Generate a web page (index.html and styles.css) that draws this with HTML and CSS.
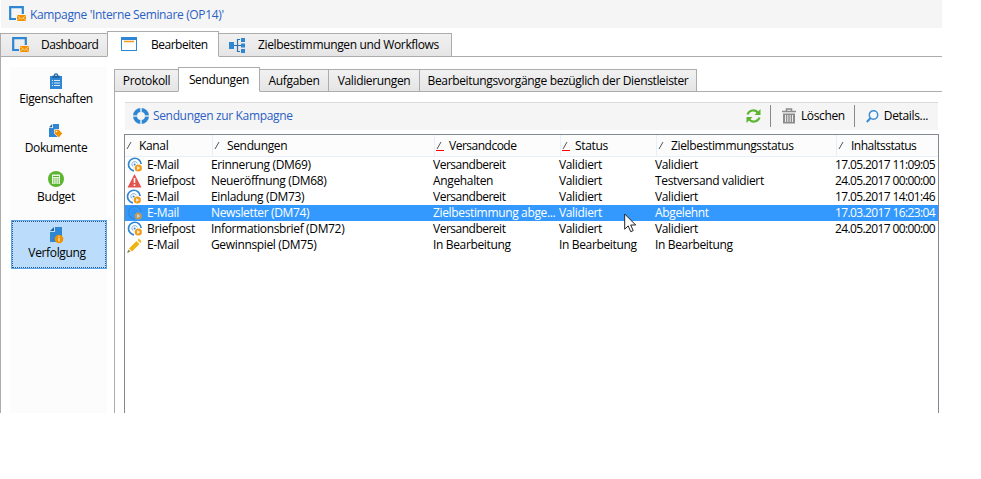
FILE: index.html
```html
<!DOCTYPE html>
<html lang="de">
<head>
<meta charset="utf-8">
<title>Kampagne</title>
<link rel="stylesheet" href="styles.css">
</head>
<body>
<svg class="defs" width="0" height="0">
  <symbol id="campaign" viewBox="0 0 17 16">
    <path d="M7 13H1.200V1.200h12.600V8" fill="none" stroke="#2f86d2" stroke-width="2.200"/>
    <rect x="8" y="9" width="9" height="6" fill="#f29100"/>
    <path d="M8 9.500l4.500 3.500 4.500-3.500M8 14.500l3-2.500M17 14.500l-3-2.500" fill="none" stroke="#fbd9a0" stroke-width=".8"/>
  </symbol>
  <symbol id="target" viewBox="0 0 16 16">
    <path d="M14.100 7A6.300 6.300 0 1 0 7 13.800" fill="none" stroke="#2f86d2" stroke-width="1.700"/>
    <path d="M10.300 6.300A2.800 2.800 0 1 0 6.500 9.900" fill="none" stroke="#2f86d2" stroke-width="1" opacity=".6"/>
    <circle cx="7.600" cy="7.400" r="1" fill="#2f86d2"/>
    <circle cx="11.300" cy="11" r="3.600" fill="#f29a1c"/>
    <path d="M10.200 9l3 2-3 2z" fill="#fff3dc"/>
  </symbol>
  <symbol id="slash" viewBox="0 0 8 10">
    <path d="M1 8l4-7" stroke="#555" stroke-width="1" fill="none"/>
  </symbol>
</svg>
<div class="window">
  <header class="titlebar">
    <svg class="icon17"><use href="#campaign"/></svg>
    <span class="title">Kampagne 'Interne Seminare (OP14)'</span>
  </header>
  <nav class="tabs main-tabs">
    <div class="tab t-dash"><svg class="icon17"><use href="#campaign"/></svg><span class="tight">Dashboard</span></div>
    <div class="tab t-edit active"><svg width="16" height="14" viewBox="0 0 16 14"><rect x=".5" y=".5" width="15" height="13" fill="#fff" stroke="#2f86d2"/><path d="M0 0h16v3H0z" fill="#2f86d2"/><path d="M3 4.500h10" stroke="#f29a1c" stroke-width="1.500"/></svg><span class="tight">Bearbeiten</span></div>
    <div class="tab t-flow"><svg width="17" height="15" viewBox="0 0 17 15"><path d="M0 4h5v7H0zM12 0h4v4h-4zM12 5.500h4v4h-4zM12 11h4v4h-4z" fill="#2f86d2"/><path d="M5 7.500h7M11 1.500H8.500v12H11" fill="none" stroke="#2b6fae" stroke-width="1.200"/></svg><span>Zielbestimmungen und Workflows</span></div>
  </nav>
  <div class="body">
    <aside class="sidebar">
      <div class="side-item">
        <svg width="12" height="16" viewBox="0 0 12 16"><path d="M0 3h12v13H0z" fill="#2f86d2"/><path d="M2.500 5V2.500h1.300a2.200 2.200 0 0 1 4.400 0h1.300V5z" fill="#23639f"/><circle cx="6" cy="2.300" r=".8" fill="#fff"/><path d="M2 7.500h1M4 7.500h6M2 10h1M4 10h6M2 12.500h1M4 12.500h6" stroke="#d7e9f8" stroke-width="1"/></svg>
        <span>Eigenschaften</span>
      </div>
      <div class="side-item">
        <svg width="14" height="14" viewBox="0 0 14 14"><path d="M4 0h6v13H0V4h4z" fill="#2f86d2"/><path d="M0 3.200L3.200 0v3.200z" fill="#23639f"/><path d="M5.500 5.500h4.500l3.500 4-3.500 4.200-4.500-4z" fill="#f29100" stroke="#fff" stroke-width=".7"/><circle cx="7.500" cy="7.500" r=".8" fill="#fff"/></svg>
        <span>Dokumente</span>
      </div>
      <div class="side-item">
        <svg width="16" height="16" viewBox="0 0 16 16"><circle cx="8" cy="8" r="8" fill="#5cb531"/><rect x="4" y="3.500" width="8" height="9.500" fill="#e8f6df"/><path d="M5 5.500h6M5 8h1.500M7.300 8h1.500M9.600 8h1.500M5 10h1.500M7.300 10h1.500M9.600 10h1.500M5 12h1.500M7.300 12h1.500M9.600 12h1.500" stroke="#5cb531" stroke-width="1"/></svg>
        <span>Budget</span>
      </div>
      <div class="side-item selected">
        <svg width="14" height="17" viewBox="0 0 14 17"><path d="M5 0h7v15H0V5h5z" fill="#2f86d2"/><path d="M0 4L4 0v4z" fill="#23639f"/><circle cx="9" cy="12" r="4.300" fill="#f29100"/><path d="M9 9v1.200M9 11v3.500" stroke="#fde6be" stroke-width="1.300"/></svg>
        <span>Verfolgung</span>
      </div>
    </aside>
    <main class="content">
      <nav class="tabs sub-tabs">
        <div class="tab u1"><span>Protokoll</span></div>
        <div class="tab u2 active"><span>Sendungen</span></div>
        <div class="tab u3"><span>Aufgaben</span></div>
        <div class="tab u4"><span>Validierungen</span></div>
        <div class="tab u5"><span>Bearbeitungsvorgänge bezüglich der Dienstleister</span></div>
      </nav>
      <div class="panel">
        <div class="toolbar">
          <svg width="16" height="16" viewBox="0 0 16 16"><circle cx="8" cy="8" r="6" fill="none" stroke="#2f86d2" stroke-width="4"/><path d="M8 0v4M8 12v4M0 8h4M12 8h4" stroke="#d5e6f5" stroke-width="1.600"/></svg>
          <span class="heading">Sendungen zur Kampagne</span>
          <svg class="refresh" width="15" height="14" viewBox="0 0 15 14"><path d="M1.500 5.500C3 .8 9.500 0 12 4M13.500 8.500C12 13.200 5.500 14 3 10" fill="none" stroke="#5cb531" stroke-width="2.200"/><path d="M14.500 0v6H8.500zM.5 14V8h6z" fill="#5cb531"/></svg>
          <i class="divider"></i>
          <svg class="trash" width="14" height="16" viewBox="0 0 14 16"><path d="M0 3.500h14M4.500 3V1h5v2" fill="none" stroke="#8c8c8c" stroke-width="1.500"/><path d="M1 5.500h12v10H1z" fill="#8c8c8c"/><path d="M3.500 7v7M5.800 7v7M8.200 7v7M10.500 7v7" stroke="#ededed" stroke-width="1"/></svg>
          <span class="delete">Löschen</span>
          <i class="divider"></i>
          <svg class="lens" width="13" height="13" viewBox="0 0 13 13"><circle cx="7.500" cy="5" r="4.200" fill="#f8fbfe" stroke="#3b8bd3" stroke-width="1.500"/><path d="M4.300 8.200L.8 12" stroke="#3b8bd3" stroke-width="2"/></svg>
          <span class="details">Details...</span>
        </div>
        <div class="table">
          <div class="row head">
            <div class="h"><svg><use href="#slash"/></svg><span>Kanal</span></div>
            <div class="h"><svg><use href="#slash"/></svg><span>Sendungen</span></div>
            <div class="h sorted"><svg><use href="#slash"/></svg><span class="tight">Versandcode</span></div>
            <div class="h sorted"><svg><use href="#slash"/></svg><span>Status</span></div>
            <div class="h"><svg><use href="#slash"/></svg><span>Zielbestimmungsstatus</span></div>
            <div class="h"><svg><use href="#slash"/></svg><span class="tight">Inhaltsstatus</span></div>
          </div>
          <div class="row"><div class="kind"><svg class="mark"><use href="#target"/></svg>E-Mail</div><div>Erinnerung (DM69)</div><div class="tight">Versandbereit</div><div>Validiert</div><div>Validiert</div><div class="date">17.05.2017 11:09:05</div></div>
          <div class="row"><div class="kind"><svg class="mark" viewBox="0 0 16 16"><path d="M7.500 1L14.500 14.500H.5z" fill="#e2554f"/><path d="M7.500 5v5M7.500 11.300v1.700" stroke="#fff" stroke-width="1.600"/></svg>Briefpost</div><div>Neueröffnung (DM68)</div><div>Angehalten</div><div>Validiert</div><div>Testversand validiert</div><div class="date">24.05.2017 00:00:00</div></div>
          <div class="row"><div class="kind"><svg class="mark shifted"><use href="#target"/></svg>E-Mail</div><div>Einladung (DM73)</div><div class="tight">Versandbereit</div><div>Validiert</div><div>Validiert</div><div class="date">17.05.2017 14:01:46</div></div>
          <div class="row current"><div class="kind"><svg class="mark"><use href="#target"/></svg>E-Mail</div><div>Newsletter (DM74)</div><div class="clipped">Zielbestimmung abge...</div><div>Validiert</div><div>Abgelehnt</div><div class="date">17.03.2017 16:23:04</div></div>
          <div class="row"><div class="kind"><svg class="mark"><use href="#target"/></svg>Briefpost</div><div>Informationsbrief (DM72)</div><div class="tight">Versandbereit</div><div>Validiert</div><div>Validiert</div><div class="date">24.05.2017 00:00:00</div></div>
          <div class="row"><div class="kind"><svg class="mark" viewBox="0 0 16 16"><path d="M2 11.500L9.500 4l3 3L5 14.500zM10.500 3L12 1.800l2.500 2.500L13.300 6z" fill="#f0b40f"/><path d="M1.500 12.500l2 2L0 16z" fill="#8d7a45"/></svg>E-Mail</div><div>Gewinnspiel (DM75)</div><div>In Bearbeitung</div><div>In Bearbeitung</div><div>In Bearbeitung</div><div></div></div>
        </div>
      </div>
    </main>
  </div>
  <svg class="cursor" width="13" height="20" viewBox="0 0 13 20"><path d="M.7 1v15.200l3.500-3.300 2.500 5.800 2.500-1.100-2.500-5.600h5z" fill="#fff" stroke="#222" stroke-width="1"/></svg>
</div>
</body>
</html>
```
FILE: styles.css
```css
* { box-sizing: border-box; }
body {
  margin: 0;
  background: #fff;
  color: #000;
  font: 12px/16px "Open Sans", "Noto Sans", sans-serif;
  letter-spacing: -0.35px;
  overflow: hidden;
}
svg { display: block; flex: none; }
.defs { position: absolute; }
span, .row > div { white-space: nowrap; }
.tight { letter-spacing: -0.5px; }
.window { position: relative; width: 942px; height: 413px; display: flex; flex-direction: column; overflow: hidden; }
.icon17 { width: 17px; height: 16px; }

.titlebar { height: 28px; margin-left: 1px; padding-left: 8px; display: flex; align-items: center; gap: 4px; background: #f5f5f5; color: #2b5fc4; flex: none; }
.title { padding-top: 2px; }

.tabs { display: flex; align-items: flex-end; flex: none; }
.tab { display: flex; align-items: center; border: 1px solid #acacac; background: linear-gradient(#f1f1f1, #e5e5e5); }
.tab + .tab { border-left: 0; }
.tab.active { background: #fff; border-bottom-color: #fff; }
.main-tabs { height: 29px; box-shadow: inset 0 -1px #acacac; }
.main-tabs .tab { height: 24px; }
.main-tabs .active { height: 26px; }
.main-tabs .active span { padding-top: 1px; }
.t-dash { width: 107px; padding-left: 11px; gap: 12px; border-right: 0; }
.main-tabs .t-edit { width: 112px; padding-left: 13px; gap: 14px; border-left: 1px solid #acacac; }
.t-flow { width: 233px; padding-left: 10px; gap: 12px; }

.body { flex: 1; display: flex; border-left: 1px solid #acacac; }
.sidebar { width: 97px; margin: 10px 0 0 9px; background: #fcfcfc; flex: none; }
.side-item { height: 49px; display: flex; flex-direction: column; align-items: center; justify-content: flex-end; padding-right: 5px; gap: 2px; }
.side-item:first-child { height: 40px; }
.side-item.selected { height: 49px; width: 96px; margin: 15px 0 0 1px; padding: 0 4px 7px 0; gap: 1px; background: #bbddfb; border: 1px solid #5ba7ea; outline: 1px dotted #2b5a8c; outline-offset: -2px; }

.content { flex: 1; min-width: 0; margin: 10px 0 0 7px; display: flex; flex-direction: column; }
.sub-tabs { height: 25px; box-shadow: inset 0 -1px #acacac; }
.sub-tabs .tab { height: 23px; justify-content: center; }
.sub-tabs .active { height: 25px; }
.sub-tabs .active span { padding-top: 1px; }
.u1 { width: 64px; border-right: 0; }
.sub-tabs .u2 { width: 82px; border-left: 1px solid #acacac; }
.u3 { width: 69px; }
.u4 { width: 91px; }
.u5 { width: 277px; }
.panel { flex: 1; border-left: 1px solid #acacac; padding: 10px 3px 0 9px; display: flex; flex-direction: column; }

.toolbar { height: 28px; margin: 0 1px 4px 1px; padding: 0 10px 1px 8px; border-top: 1px solid #dadada; background: #f5f5f5; display: flex; align-items: center; flex: none; }
.heading { margin-left: 4px; color: #2b5fc4; }
.refresh { margin-left: auto; }
.divider { width: 1px; height: 22px; margin: 0 11px 0 9px; background: #8a8a8a; }
.trash { margin-right: 5px; }
.lens { margin-right: 5px; }

.table { flex: 1; border: 1px solid #828790; border-bottom: 0; }
.row { display: grid; grid-template-columns: 86px 222px 126px 96px 180px minmax(0, 1fr); height: 16px; }
.row.head { height: 22px; background: #fcfcfc; border-bottom: 1px solid #e6effa; }
.h { display: flex; align-items: center; gap: 5px; padding-left: 1px; position: relative; }
.h + .h { border-left: 1px solid #e6effa; margin-left: 1px; }
.h svg { width: 8px; height: 10px; }
.sorted::after { content: ""; position: absolute; left: 1px; top: 15px; width: 8px; height: 1px; background: #f00; }
.kind { display: flex; gap: 5px; padding-left: 2px; }
.mark { width: 16px; height: 16px; margin-right: -1px; }
.shifted { margin: 0 0 0 -1px; }
.date { letter-spacing: -0.62px; }
.current { background: #3399ff; color: #fff; }
.current .mark { opacity: .75; }
.cursor { position: absolute; left: 624px; top: 213px; }
```
